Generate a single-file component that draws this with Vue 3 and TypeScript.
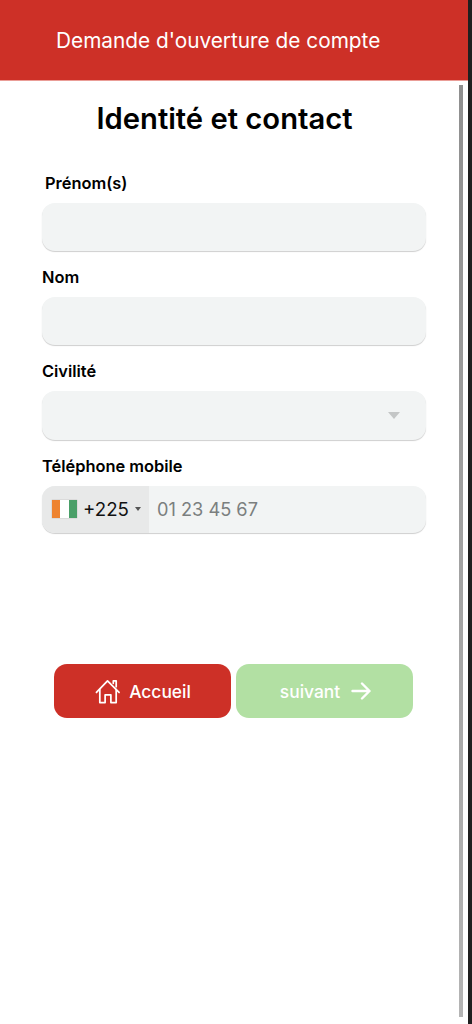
<script setup lang="ts">
const title: string = "Identité et contact";
</script>

<template>
  <div class="screen">
    <div class="frame">
      <header class="topbar"><span>Demande d'ouverture de compte</span></header>
      <main class="content">
        <h1>{{ title }}</h1>
        <form class="form" @submit.prevent>
          <div class="field first">
            <label class="indent">Prénom(s)</label>
            <div class="box"></div>
          </div>
          <div class="field">
            <label>Nom</label>
            <div class="box"></div>
          </div>
          <div class="field">
            <label>Civilité</label>
            <div class="box select"><i class="caret"></i></div>
          </div>
          <div class="field">
            <label>Téléphone mobile</label>
            <div class="box phone">
              <div class="dial">
                <span class="flag"><b class="o"></b><b class="w"></b><b class="g"></b></span>
                <span class="code">+225</span>
                <i class="mini"></i>
              </div>
              <span class="placeholder">01 23 45 67</span>
            </div>
          </div>
        </form>
        <div class="actions">
          <button class="btn home" type="button">
            <svg width="26" height="27" viewBox="0 0 27 27" fill="none" stroke="#fff" stroke-width="1.8" stroke-linejoin="round" stroke-linecap="round">
              <path d="M1.5 14.5 13 2.5l12 12" />
              <path d="M5 11.5V25h5.5v-8h6v8H22V11.5" />
              <path d="M19 5V2.5h3V8.5" />
            </svg>
            <span>Accueil</span>
          </button>
          <button class="btn next" type="button">
            <span>suivant</span>
            <svg width="20" height="18" viewBox="0 0 20 18" fill="none" stroke="#fff" stroke-width="2.4" stroke-linecap="round" stroke-linejoin="round">
              <path d="M1.5 9h17M11 1.5 18.5 9 11 16.5" />
            </svg>
          </button>
        </div>
      </main>
      <div class="scrollbar"></div>
    </div>
  </div>
</template>

<style>
html, body { margin: 0; background: #fff; }
</style>

<style scoped>
.screen {
  width: 472px;
  height: 1024px;
  display: flex;
  background: #1f1f1f;
  overflow: hidden;
  font-family: "Inter", "Noto Sans", sans-serif;
  color: #000;
}
.frame {
  position: relative;
  width: 468px;
  background: #fff;
  display: flex;
  flex-direction: column;
}
.topbar {
  height: 80px;
  background: #cd3027;
  border-bottom: 1px solid #ea9d97;
  display: flex;
  align-items: center;
  padding-left: 56px;
  color: #fff;
  font-size: 20.8px;
  font-weight: 400;
}
.content { display: flex; flex-direction: column; flex: 1; }
h1 {
  margin: 20px 19px 0 0;
  height: 36px;
  line-height: 36px;
  text-align: center;
  font-size: 29.2px;
  font-weight: 600;
}
.form {
  display: flex;
  flex-direction: column;
  gap: 12px;
  margin: 0 42px;
  padding-top: 32px;
}
.field { display: flex; flex-direction: column; }
label {
  display: block;
  height: 34px;
  line-height: 20px;
  padding-top: 4px;
  box-sizing: border-box;
  font-size: 16.4px;
  font-weight: 600;
}
.indent { padding-left: 3px; }
.box {
  height: 48px;
  background: #f2f4f4;
  border-radius: 13px;
  box-shadow: 0 1px 1px #cfcfcf;
  display: flex;
  align-items: center;
  overflow: hidden;
}
.select { height: 49px; justify-content: flex-end; padding-right: 26px; box-sizing: border-box; }
.caret {
  width: 0;
  height: 0;
  border-left: 6.5px solid transparent;
  border-right: 6.5px solid transparent;
  border-top: 7px solid #c4c6c6;
}
.phone { height: 47px; }
.dial {
  width: 107px;
  height: 100%;
  background: #e8e9e9;
  display: flex;
  align-items: center;
  flex: none;
  padding: 0 0 1px 10px;
  box-sizing: border-box;
}
.flag { display: flex; width: 25px; height: 18px; flex: none; box-shadow: 0 0 1px #9a9a9a; }
.flag b { flex: 1; }
.o { background: #ee8431; }
.w { background: #fff; }
.g { background: #4a9f68; }
.code { margin-left: 6px; font-size: 18.7px; color: #111; }
.mini {
  margin-left: 6px;
  width: 0;
  height: 0;
  border-left: 3px solid transparent;
  border-right: 3px solid transparent;
  border-top: 4px solid #555;
}
.placeholder { margin: 0 0 1px 8px; font-size: 18.2px; color: #7b7f7f; }
.actions {
  display: flex;
  gap: 5px;
  margin: 131px 0 0 54px;
}
.btn {
  width: 177px;
  height: 54px;
  border: 0;
  border-radius: 13px;
  color: #fff;
  font-family: inherit;
  font-size: 17.4px;
  font-weight: 500;
  display: flex;
  align-items: center;
  justify-content: center;
  padding: 0;
}
.home { background: #cd3027; gap: 8px; padding-left: 1px; }
.next { background: #b2e0a3; gap: 11px; padding-left: 2px; }
.scrollbar {
  position: absolute;
  left: 459px;
  top: 85px;
  width: 4px;
  height: 932px;
  background: linear-gradient(#8f8f8f, #b4b4b4);
}
</style>
